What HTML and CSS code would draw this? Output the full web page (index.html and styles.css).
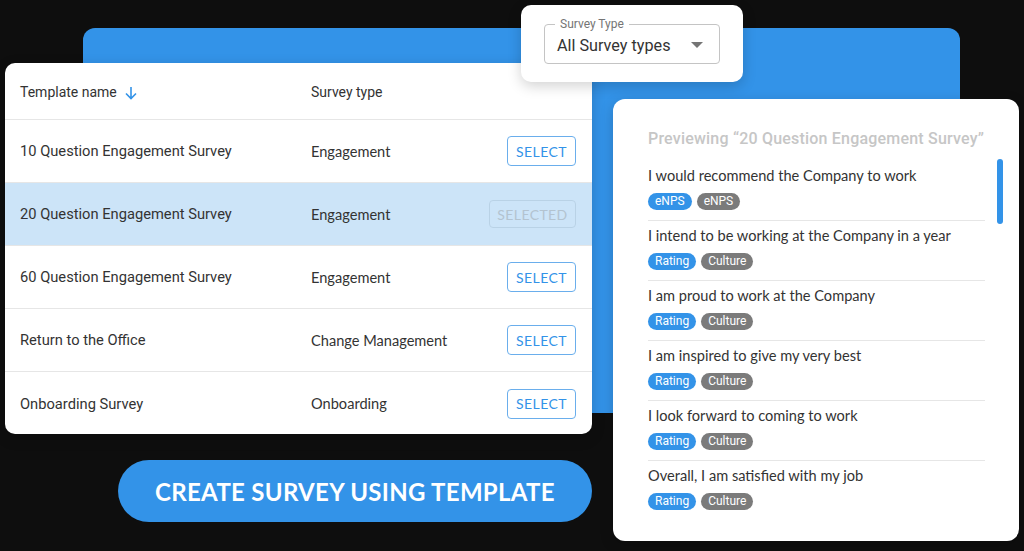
FILE: index.html
```html
<!DOCTYPE html>
<html lang="en">
<head>
  <meta charset="UTF-8">
  <title>Survey Templates</title>
  <link rel="stylesheet" href="styles.css">
</head>
<body>
  <div class="stage">
    <div class="backdrop"></div>

    <div class="card templates">
      <div class="row head">
        <div class="col-name">Template name
          <svg class="sort" width="14" height="14" viewBox="0 0 14 14"><path d="M7 1v11M2 7.5L7 12.5l5-5" fill="none" stroke="#3393e8" stroke-width="1.6"/></svg>
        </div>
        <div class="col-type">Survey type</div>
        <div class="col-action"></div>
      </div>
      <div class="row">
        <div class="col-name">10 Question Engagement Survey</div>
        <div class="col-type">Engagement</div>
        <div class="col-action"><button class="pick">SELECT</button></div>
      </div>
      <div class="row selected">
        <div class="col-name">20 Question Engagement Survey</div>
        <div class="col-type">Engagement</div>
        <div class="col-action"><button class="pick done">SELECTED</button></div>
      </div>
      <div class="row">
        <div class="col-name">60 Question Engagement Survey</div>
        <div class="col-type">Engagement</div>
        <div class="col-action"><button class="pick">SELECT</button></div>
      </div>
      <div class="row">
        <div class="col-name">Return to the Office</div>
        <div class="col-type">Change Management</div>
        <div class="col-action"><button class="pick">SELECT</button></div>
      </div>
      <div class="row last">
        <div class="col-name">Onboarding Survey</div>
        <div class="col-type">Onboarding</div>
        <div class="col-action"><button class="pick">SELECT</button></div>
      </div>
    </div>

    <div class="card filter">
      <div class="field">
        <span class="field-label">Survey Type</span>
        <span class="field-value">All Survey types</span>
        <svg class="caret" width="12" height="6" viewBox="0 0 12 6"><path d="M0 0h12L6 6z" fill="#757575"/></svg>
      </div>
    </div>

    <div class="card preview">
      <h2>Previewing “20 Question Engagement Survey”</h2>
      <div class="scroll"></div>
      <ul class="questions">
        <li>
          <p>I would recommend the Company to work</p>
          <span class="tag blue">eNPS</span><span class="tag grey">eNPS</span>
        </li>
        <li>
          <p>I intend to be working at the Company in a year</p>
          <span class="tag blue">Rating</span><span class="tag grey">Culture</span>
        </li>
        <li>
          <p>I am proud to work at the Company</p>
          <span class="tag blue">Rating</span><span class="tag grey">Culture</span>
        </li>
        <li>
          <p>I am inspired to give my very best</p>
          <span class="tag blue">Rating</span><span class="tag grey">Culture</span>
        </li>
        <li>
          <p>I look forward to coming to work</p>
          <span class="tag blue">Rating</span><span class="tag grey">Culture</span>
        </li>
        <li>
          <p>Overall, I am satisfied with my job</p>
          <span class="tag blue">Rating</span><span class="tag grey">Culture</span>
        </li>
      </ul>
    </div>

    <button class="create">CREATE SURVEY USING TEMPLATE</button>
  </div>
</body>
</html>
```

FILE: styles.css
```css
* {
  box-sizing: border-box;
}

body {
  margin: 0;
  background-color: #0e0e0e;
  font-family: Roboto, "Noto Sans", sans-serif;
  color: #333;
}

.stage {
  position: relative;
  width: 1024px;
  height: 551px;
  overflow: hidden;
}

.backdrop {
  position: absolute;
  left: 83px;
  top: 28px;
  width: 877px;
  height: 385px;
  background-color: #3393e8;
  border-radius: 12px;
}

.card {
  position: absolute;
  background-color: #fff;
  border-radius: 10px;
  box-shadow: 0 4px 14px rgba(0, 0, 0, 0.18);
}

/* template table */
.templates {
  left: 5px;
  top: 63px;
  width: 587px;
  height: 371px;
  overflow: hidden;
}

.row {
  display: flex;
  align-items: center;
  height: 63px;
  padding: 0 16px 0 15px;
  border-bottom: 1px solid #e6e6e6;
  font-size: 14.7px;
}

.row.head {
  height: 57px;
  padding-top: 2px;
  font-size: 14px;
}

.row.last {
  border-bottom: none;
}

.row.selected {
  background-color: #cce4f8;
}

.col-name {
  width: 291px;
  display: flex;
  align-items: center;
  gap: 7px;
}

.col-type {
  flex: 1;
  font-family: Lato, sans-serif;
  font-size: 14.6px;
}

.head .col-type {
  font-family: Roboto, sans-serif;
  font-size: 14px;
}

.sort {
  margin-top: 1px;
}

.col-action {
  display: flex;
  justify-content: flex-end;
}

.pick {
  font-family: Lato, sans-serif;
  font-size: 14px;
  letter-spacing: 0.4px;
  color: #3393e8;
  background: #fff;
  border: 1px solid #6aaeec;
  border-radius: 4px;
  width: 69px;
  height: 30px;
  padding: 0;
  cursor: pointer;
}

.pick.done {
  width: 87px;
  height: 28px;
  color: #b3c3d0;
  background: transparent;
  border-color: #b9d2e6;
}

/* filter */
.filter {
  left: 521px;
  top: 5px;
  width: 222px;
  height: 77px;
  padding: 19px 23px 0 23px;
}

.field {
  position: relative;
  height: 40px;
  border: 1px solid #c4c4c4;
  border-radius: 4px;
  display: flex;
  align-items: center;
  padding: 2px 16px 0 12px;
}

.field-label {
  position: absolute;
  left: 10px;
  top: -8px;
  padding: 0 5px;
  background: #fff;
  font-size: 12px;
  line-height: 14px;
  color: #757575;
}

.field-value {
  flex: 1;
  font-size: 16.2px;
  color: #333;
}

/* preview */
.preview {
  left: 613px;
  top: 99px;
  width: 406px;
  height: 442px;
  border-radius: 12px;
  padding: 30px 34px 0 35px;
}

.preview h2 {
  margin: 0;
  font-size: 16px;
  font-weight: 500;
  color: #c6c6c6;
  white-space: nowrap;
  letter-spacing: 0.2px;
}

.scroll {
  position: absolute;
  left: 384px;
  top: 60px;
  width: 6px;
  height: 65px;
  border-radius: 3px;
  background-color: #3393e8;
}

.questions {
  list-style: none;
  margin: 13px 0 0 0;
  padding: 0;
}

.questions li {
  height: 60px;
  padding-top: 5px;
  border-bottom: 1px solid #e6e6e6;
}

.questions li:last-child {
  border-bottom: none;
}

.questions p {
  margin: 0 0 4px 0;
  font-family: Lato, sans-serif;
  font-size: 14.6px;
  line-height: 20px;
  color: #333;
}

.tag {
  display: inline-block;
  height: 17px;
  line-height: 17px;
  padding: 0 7px;
  margin-right: 5px;
  border-radius: 9px;
  font-size: 12px;
  color: #fff;
}

.tag.blue {
  background-color: #3393e8;
}

.tag.grey {
  background-color: #7b7b7b;
}

/* main action */
.create {
  position: absolute;
  left: 118px;
  top: 460px;
  width: 474px;
  height: 62px;
  border: none;
  border-radius: 31px;
  background-color: #3393e8;
  color: #fff;
  font-family: Lato, sans-serif;
  font-weight: 700;
  font-size: 24px;
  letter-spacing: 0.3px;
  cursor: pointer;
}
```
